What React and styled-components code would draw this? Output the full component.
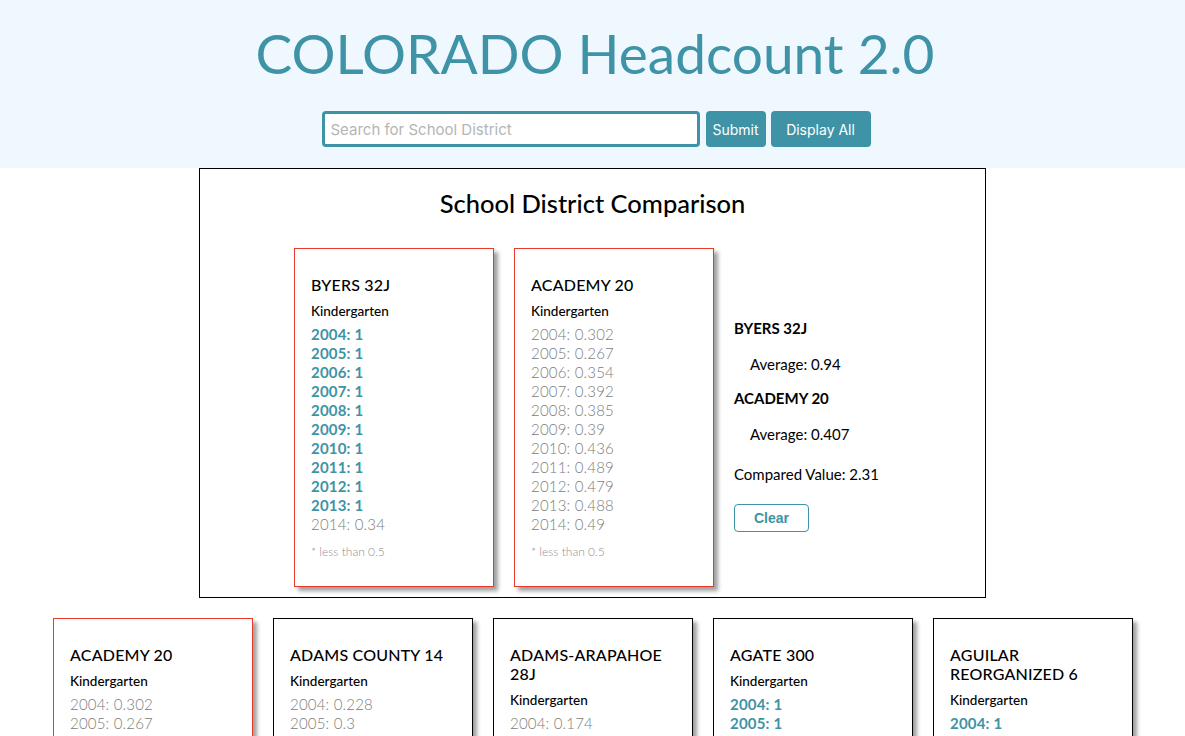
import React from "react";
import styled, { createGlobalStyle } from "styled-components";

const GlobalStyle = createGlobalStyle`
  html, body {
    margin: 0;
    padding: 0;
    background: #ffffff;
    font-family: Lato, "Open Sans", sans-serif;
    color: #000;
  }
`;

const Header = styled.header`
  background-color: #f0f8ff;
  height: 168px;
  display: flex;
  flex-direction: column;
  align-items: center;
  box-sizing: border-box;
  padding-top: 21px;
`;

const Title = styled.h1`
  margin: 0;
  color: #3e93a6;
  font-family: Lato, sans-serif;
  font-weight: 400;
  font-size: 55px;
  line-height: 64px;
  padding-left: 5px;
`;

const SearchRow = styled.div`
  display: flex;
  align-items: center;
  gap: 5px;
  margin-top: 26px;
  padding-left: 7px;
`;

const SearchInput = styled.input`
  width: 378px;
  height: 36px;
  box-sizing: border-box;
  border: 3px solid #3e93a6;
  border-radius: 4px;
  padding: 0 6px;
  margin-right: 1px;
  font-family: Inter, "Liberation Sans", sans-serif;
  font-size: 15px;
  outline: none;
  &::placeholder {
    color: #b5b5b5;
  }
`;

const Button = styled.button`
  height: 36px;
  width: ${(p) => p.w}px;
  box-sizing: border-box;
  border: none;
  border-radius: 4px;
  background-color: #3e93a6;
  color: #fff;
  font-family: Inter, "Liberation Sans", sans-serif;
  font-size: 14px;
  cursor: pointer;
`;

const Comparison = styled.section`
  width: 787px;
  height: 430px;
  box-sizing: border-box;
  margin: 0 auto;
  border: 1px solid #000;
  display: flex;
  flex-direction: column;
`;

const CompTitle = styled.h2`
  margin: 18px 0 0;
  text-align: center;
  font-family: Lato, sans-serif;
  font-weight: 500;
  font-size: 25.5px;
  line-height: 32px;
`;

const CompRow = styled.div`
  display: flex;
  align-items: center;
  gap: 20px;
  padding-left: 94px;
  margin-top: 29px;
`;

const Card = styled.div`
  width: 200px;
  height: 339px;
  box-sizing: border-box;
  border: 1px solid ${(p) => (p.selected ? "#e8392b" : "#000")};
  box-shadow: 4px 4px 4px #a0a0a0;
  background: #fff;
  padding: 26px 15px 0 16px;
  flex-shrink: 0;
`;

const CardName = styled.h3`
  margin: 0 0 8px;
  font-size: 16px;
  line-height: 19px;
  font-weight: 500;
  letter-spacing: 0.2px;
`;

const Grade = styled.h4`
  margin: 0 0 5px;
  font-size: 13.5px;
  line-height: 18px;
  font-weight: 500;
`;

const YearRow = styled.p`
  margin: 0;
  font-size: 15px;
  line-height: 19px;
  letter-spacing: 0.2px;
  color: ${(p) => (p.high ? "#3e93a6" : "#7c7c7c")};
  font-weight: ${(p) => (p.high ? 700 : 300)};
`;

const Note = styled.p`
  margin: 10px 0 0;
  font-size: 12px;
  line-height: 16px;
  font-weight: 300;
  color: #8f8f8f;
`;

const Summary = styled.div`
  display: flex;
  flex-direction: column;
  padding-top: 14px;
`;

const SumName = styled.h4`
  margin: 0;
  font-size: 15px;
  line-height: 20px;
  font-weight: 700;
`;

const SumAvg = styled.p`
  margin: 16px 0 14px 16px;
  font-size: 15px;
  line-height: 20px;
  font-weight: 400;
`;

const Compared = styled.p`
  margin: 6px 0 20px;
  font-size: 15px;
  line-height: 20px;
`;

const ClearButton = styled.button`
  width: 75px;
  height: 28px;
  box-sizing: border-box;
  background: #fff;
  border: 1px solid #3e93a6;
  border-radius: 4px;
  color: #3e93a6;
  font-family: "Liberation Sans", Arial, sans-serif;
  font-weight: 700;
  font-size: 14px;
  cursor: pointer;
`;

const Grid = styled.div`
  display: flex;
  flex-wrap: wrap;
  justify-content: center;
  gap: 20px;
  padding: 20px 0 40px 1px;
`;

const years = [2004, 2005, 2006, 2007, 2008, 2009, 2010, 2011, 2012, 2013, 2014];

const districts = {
  byers: { name: "BYERS 32J", values: [1, 1, 1, 1, 1, 1, 1, 1, 1, 1, 0.34] },
  academy: {
    name: "ACADEMY 20",
    values: [0.302, 0.267, 0.354, 0.392, 0.385, 0.39, 0.436, 0.489, 0.479, 0.488, 0.49],
  },
  adams14: {
    name: "ADAMS COUNTY 14",
    values: [0.228, 0.3, 0.305, 0.314, 0.338, 0.326, 0.417, 0.456, 0.461, 0.471, 0.5],
  },
  adamsArap: {
    name: "ADAMS-ARAPAHOE 28J",
    values: [0.174, 0.218, 0.336, 0.357, 0.481, 0.479, 0.524, 0.554, 0.582, 0.588, 0.597],
  },
  agate: { name: "AGATE 300", values: [1, 1, 1, 1, 1, 1, 1, 1, 1, 1, 1] },
  aguilar: {
    name: "AGUILAR REORGANIZED 6",
    values: [1, 0.5, 1, 1, 1, 1, 1, 1, 1, 1, 1],
  },
};

function DistrictCard({ district, selected }) {
  return (
    <Card selected={selected}>
      <CardName>{district.name}</CardName>
      <Grade>Kindergarten</Grade>
      {years.map((y, i) => (
        <YearRow key={y} high={district.values[i] >= 0.5}>
          {y}: {district.values[i]}
        </YearRow>
      ))}
      <Note>* less than 0.5</Note>
    </Card>
  );
}

export default function App() {
  const list = [
    ["academy", true],
    ["adams14", false],
    ["adamsArap", false],
    ["agate", false],
    ["aguilar", false],
  ];
  return (
    <>
      <GlobalStyle />
      <Header>
        <Title>COLORADO Headcount 2.0</Title>
        <SearchRow>
          <SearchInput placeholder="Search for School District" />
          <Button w={60}>Submit</Button>
          <Button w={100}>Display All</Button>
        </SearchRow>
      </Header>
      <Comparison>
        <CompTitle>School District Comparison</CompTitle>
        <CompRow>
          <DistrictCard district={districts.byers} selected />
          <DistrictCard district={districts.academy} selected />
          <Summary>
            <SumName>BYERS 32J</SumName>
            <SumAvg>Average: 0.94</SumAvg>
            <SumName>ACADEMY 20</SumName>
            <SumAvg>Average: 0.407</SumAvg>
            <Compared>Compared Value: 2.31</Compared>
            <div>
              <ClearButton>Clear</ClearButton>
            </div>
          </Summary>
        </CompRow>
      </Comparison>
      <Grid>
        {list.map(([key, sel]) => (
          <DistrictCard key={key} district={districts[key]} selected={sel} />
        ))}
      </Grid>
    </>
  );
}
